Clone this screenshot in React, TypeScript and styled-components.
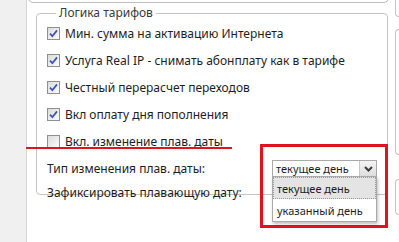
import React from 'react';
import styled, { createGlobalStyle } from 'styled-components';

const Global = createGlobalStyle`
  html, body {
    margin: 0;
    padding: 0;
    background: #fff;
    overflow: hidden;
  }
  body {
    font-family: "Noto Sans", "DejaVu Sans", sans-serif;
    font-size: 12px;
    color: #1e1e1e;
  }
`;

const Screen = styled.div`
  position: relative;
  display: flex;
  width: 399px;
  height: 242px;
  overflow: hidden;
`;

const SideStrip = styled.div`
  width: 26px;
  flex-shrink: 0;
  background: #f0f0f0;
  border-right: 1px solid #d4d4d4;
`;

const Main = styled.div`
  width: 364px;
  flex-shrink: 0;
  display: flex;
  flex-direction: column;
`;

const TopPanel = styled.div`
  height: 10px;
  margin: -9px 2px 0 1px;
  border: 1px solid #bdbdbd;
  border-radius: 0 0 5px 5px;
`;

const Group = styled.fieldset`
  margin: 3px 0 0 9px;
  padding: 0 0 0 10px;
  width: 352px;
  height: 189px;
  box-sizing: border-box;
  border: 1px solid #c4c4c4;
  border-radius: 4px;
  display: flex;
  flex-direction: column;
`;

const Legend = styled.legend`
  padding: 0 3px;
  margin-left: 9px;
  color: #3a3a3a;
  line-height: 14px;
`;

const Row = styled.label`
  display: flex;
  align-items: center;
  gap: 5px;
  height: 27px;
  white-space: nowrap;
`;

const Box = styled.span`
  width: 11px;
  height: 11px;
  flex-shrink: 0;
  border: 1px solid #8f8f8f;
  background: linear-gradient(135deg, #dcdcdc, #fbfbfb);
  display: flex;
  align-items: center;
  justify-content: center;
`;

const FieldRow = styled.div<{ h: number }>`
  display: flex;
  align-items: center;
  justify-content: space-between;
  height: ${p => p.h}px;
  padding-right: 10px;
  white-space: nowrap;
`;

const Select = styled.div`
  position: relative;
  width: 105px;
  height: 17px;
  box-sizing: border-box;
  border: 1px solid #a9a9a9;
  background: #fff;
  display: flex;
  align-items: center;
  font-size: 11px;
`;

const SelectText = styled.span`
  flex: 1;
  padding-left: 3px;
`;

const ArrowButton = styled.span`
  width: 16px;
  height: 15px;
  border-left: 1px solid #c8c8c8;
  background: linear-gradient(#f4f4f4, #dedede);
  display: flex;
  align-items: center;
  justify-content: center;
`;

const Menu = styled.div`
  position: absolute;
  top: 15px;
  left: -1px;
  width: 105px;
  box-sizing: border-box;
  border: 1px solid #a9a9a9;
  background: #fff;
  box-shadow: 1px 2px 3px rgba(0, 0, 0, 0.25);
  z-index: 2;
`;

const MenuItem = styled.div<{ active?: boolean }>`
  height: 22px;
  box-sizing: border-box;
  padding-left: 3px;
  display: flex;
  align-items: center;
  background: ${p => (p.active ? '#e4e4e4' : '#fff')};
  border: 1px dotted ${p => (p.active ? '#9a9a9a' : 'transparent')};
`;

const RightStrip = styled.div`
  flex: 1;
  display: flex;
  flex-direction: column;
  padding-left: 4px;
`;

const SideBox = styled.div<{ h: number; gap: number }>`
  height: ${p => p.h}px;
  margin-top: ${p => p.gap}px;
  border: 1px solid #c4c4c4;
  border-right: none;
  border-radius: 5px 0 0 5px;
`;

const Underline = styled.div`
  position: absolute;
  left: 26px;
  top: 147px;
  width: 206px;
  height: 2px;
  background: #e0141e;
`;

const Highlight = styled.div`
  position: absolute;
  left: 260px;
  top: 144px;
  width: 128px;
  height: 84px;
  box-sizing: border-box;
  border: 3px solid #e0141e;
  pointer-events: none;
`;

const Check = () => (
  <svg width="9" height="9" viewBox="0 0 9 9">
    <path d="M1 4.6 L3.4 7.2 L8 1.4" fill="none" stroke="#3d55b8" strokeWidth="1.8" />
  </svg>
);

const Chevron = () => (
  <svg width="9" height="6" viewBox="0 0 9 6">
    <path d="M1 1 L4.5 4.5 L8 1" fill="none" stroke="#3c3c3c" strokeWidth="2" />
  </svg>
);

const options = [
  { text: 'Мин. сумма на активацию Интернета', checked: true },
  { text: 'Услуга Real IP - снимать абонплату как в тарифе', checked: true },
  { text: 'Честный перерасчет переходов', checked: true },
  { text: 'Вкл оплату дня пополнения', checked: true },
  { text: 'Вкл. изменение плав. даты', checked: false },
];

export default function App(): JSX.Element {
  return (
    <Screen>
      <Global />
      <SideStrip />
      <Main>
        <TopPanel />
        <Group>
          <Legend>Логика тарифов</Legend>
          {options.map(o => (
            <Row key={o.text}>
              <Box>{o.checked && <Check />}</Box>
              {o.text}
            </Row>
          ))}
          <FieldRow h={27}>
            <span>Тип изменения плав. даты:</span>
            <Select>
              <SelectText>текущее день</SelectText>
              <ArrowButton>
                <Chevron />
              </ArrowButton>
              <Menu>
                <MenuItem active>текущее день</MenuItem>
                <MenuItem>указанный день</MenuItem>
              </Menu>
            </Select>
          </FieldRow>
          <FieldRow h={21}>
            <span>Зафиксировать плавающую дату:</span>
          </FieldRow>
        </Group>
      </Main>
      <RightStrip>
        <SideBox h={24} gap={-9} />
        <SideBox h={124} gap={12} />
        <SideBox h={34} gap={24} />
      </RightStrip>
      <Underline />
      <Highlight />
    </Screen>
  );
}
